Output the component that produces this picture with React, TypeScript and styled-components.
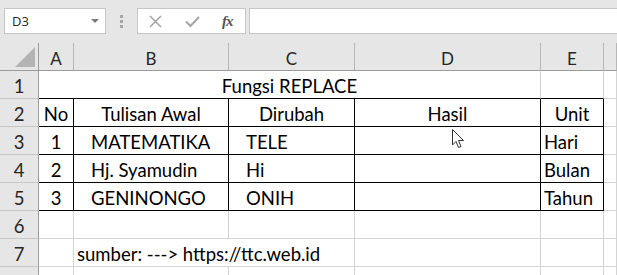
import React from 'react'
import styled, { createGlobalStyle } from 'styled-components'

const GlobalStyle = createGlobalStyle`
  html, body {
    margin: 0;
    padding: 0;
    background: #e6e6e6;
  }
  body {
    font-family: Lato, "Liberation Sans", sans-serif;
  }
`

const Window = styled.div`
  width: 617px;
  height: 275px;
  overflow: hidden;
  background: #e6e6e6;
  position: relative;
`

const FormulaBar = styled.div`
  display: flex;
  align-items: center;
  height: 26px;
  padding: 8px 0 9px 4px;
  border-top: 1px solid #dadada;
  margin-top: -1px;
`

const NameBox = styled.div`
  box-sizing: border-box;
  width: 102px;
  height: 26px;
  background: #fff;
  border: 1px solid #c6c6c6;
  display: flex;
  align-items: center;
  justify-content: space-between;
  padding: 0 6px 0 7px;
  font-family: "Open Sans", "Liberation Sans", sans-serif;
  font-size: 13px;
  color: #262626;
`

const Caret = styled.span`
  width: 0;
  height: 0;
  border-left: 4px solid transparent;
  border-right: 4px solid transparent;
  border-top: 4px solid #7a7a7a;
`

const Grip = styled.div`
  width: 31px;
  display: flex;
  flex-direction: column;
  align-items: center;
  gap: 2px;
  span {
    width: 3px;
    height: 3px;
    background: #a6a6a6;
  }
`

const ButtonBox = styled.div`
  box-sizing: border-box;
  width: 109px;
  height: 26px;
  background: #fff;
  border: 1px solid #c6c6c6;
  display: flex;
  align-items: center;
  padding-left: 11px;
  gap: 23px;
`

const Fx = styled.span`
  font-family: "Liberation Serif", serif;
  font-style: italic;
  font-weight: bold;
  font-size: 15px;
  color: #555;
  margin-left: -1px;
  letter-spacing: -1px;
`

const FormulaInput = styled.div`
  box-sizing: border-box;
  flex: 1;
  height: 26px;
  margin-left: 3px;
  margin-right: -4px;
  background: #fff;
  border: 1px solid #c6c6c6;
`

const Sheet = styled.div`
  display: grid;
  grid-template-columns: 39px 35px 155px 126px 186px 63px 1fr;
  grid-template-rows: 28px repeat(8, 28px);
  background: #fff;
`

type CellProps = {
  $align?: 'left' | 'center' | 'right'
  $indent?: number
  $span?: number
  $right?: 'grid' | 'black' | 'none'
  $bottom?: 'grid' | 'black'
}

const lineColor = (v?: string) =>
  v === 'black' ? '#000' : v === 'none' ? 'transparent' : '#d4d4d4'

const Cell = styled.div<CellProps>`
  box-sizing: border-box;
  grid-column: span ${(p) => p.$span ?? 1};
  display: flex;
  align-items: center;
  justify-content: ${(p) =>
    p.$align === 'center' ? 'center' : p.$align === 'right' ? 'flex-end' : 'flex-start'};
  padding: 2px 3px 0 ${(p) => 3 + (p.$indent ?? 0)}px;
  border-right: 1px solid ${(p) => lineColor(p.$right)};
  border-bottom: 1px solid ${(p) => lineColor(p.$bottom)};
  font-size: 18.5px;
  color: #000;
  white-space: nowrap;
  overflow: visible;
  background: #fff;
`

const ColHeader = styled.div<{ $first?: boolean }>`
  box-sizing: border-box;
  background: #e6e6e6;
  border-right: 1px solid ${(p) => (p.$first ? '#9b9b9b' : '#b7b7b7')};
  border-bottom: 1px solid #9b9b9b;
  display: flex;
  align-items: center;
  justify-content: center;
  padding-top: 3px;
  font-size: 17px;
  color: #262626;
  position: relative;
`

const SelectAll = styled.span`
  position: absolute;
  right: 3px;
  bottom: 3px;
  width: 0;
  height: 0;
  border-left: 20px solid transparent;
  border-bottom: 20px solid #b4b4b4;
`

const RowHeader = styled.div`
  box-sizing: border-box;
  background: #e6e6e6;
  border-right: 1px solid #9b9b9b;
  border-bottom: 1px solid #c6c6c6;
  display: flex;
  align-items: center;
  justify-content: center;
  padding-top: 2px;
  font-size: 18.5px;
  color: #262626;
`

const Pointer = styled.svg`
  position: absolute;
  left: 452px;
  top: 129px;
`

type Row = {
  no: string
  label: string
  cells: React.ReactNode
}

const columns = ['A', 'B', 'C', 'D', 'E', '']

const tableRows = [
  { no: '1', b: 'MATEMATIKA', c: 'TELE', e: 'Hari' },
  { no: '2', b: 'Hj. Syamudin', c: 'Hi', e: 'Bulan' },
  { no: '3', b: 'GENINONGO', c: 'ONIH', e: 'Tahun' },
]

const XIcon = () => (
  <svg width="13" height="13" viewBox="0 0 13 13">
    <path d="M1 1 L12 12 M12 1 L1 12" stroke="#a6a6a6" strokeWidth="1.6" />
  </svg>
)

const CheckIcon = () => (
  <svg width="15" height="13" viewBox="0 0 15 13">
    <path d="M1 6.5 L5.5 11 L14 2" stroke="#a6a6a6" strokeWidth="2" fill="none" />
  </svg>
)

const EmptyCells = () => (
  <>
    <Cell />
    <Cell />
    <Cell />
    <Cell />
    <Cell />
    <Cell />
  </>
)

export default function App() {
  const rows: Row[] = [
    {
      no: '1',
      label: '1',
      cells: (
        <>
          <Cell $span={4} $align="center" $bottom="black">
            Fungsi REPLACE
          </Cell>
          <Cell $bottom="black" />
          <Cell />
        </>
      ),
    },
    {
      no: '2',
      label: '2',
      cells: (
        <>
          <Cell $align="center" $right="black" $bottom="black">No</Cell>
          <Cell $align="center" $right="black" $bottom="black">Tulisan Awal</Cell>
          <Cell $align="center" $right="black" $bottom="black">Dirubah</Cell>
          <Cell $align="center" $right="black" $bottom="black">Hasil</Cell>
          <Cell $align="center" $right="black" $bottom="black">Unit</Cell>
          <Cell />
        </>
      ),
    },
    ...tableRows.map((r, i) => ({
      no: String(i + 3),
      label: String(i + 3),
      cells: (
        <>
          <Cell $align="center" $right="black" $bottom="black">{r.no}</Cell>
          <Cell $indent={14} $right="black" $bottom="black">{r.b}</Cell>
          <Cell $indent={14} $right="black" $bottom="black">{r.c}</Cell>
          <Cell $right="black" $bottom="black" />
          <Cell $right="black" $bottom="black">{r.e}</Cell>
          <Cell />
        </>
      ),
    })),
    { no: '6', label: '6', cells: <EmptyCells /> },
    {
      no: '7',
      label: '7',
      cells: (
        <>
          <Cell />
          <Cell $span={2}>sumber: ---&gt; https://ttc.web.id</Cell>
          <Cell />
          <Cell />
          <Cell />
        </>
      ),
    },
    // row 8 is only a sliver at the bottom edge, its number is not visible
    { no: '8', label: '', cells: <EmptyCells /> },
  ]

  return (
    <Window>
      <GlobalStyle />
      <FormulaBar>
        <NameBox>
          D3
          <Caret />
        </NameBox>
        <Grip>
          <span />
          <span />
          <span />
        </Grip>
        <ButtonBox>
          <XIcon />
          <CheckIcon />
          <Fx>fx</Fx>
        </ButtonBox>
        <FormulaInput />
      </FormulaBar>
      <Sheet>
        <ColHeader $first>
          <SelectAll />
        </ColHeader>
        {columns.map((c, i) => (
          <ColHeader key={i}>{c}</ColHeader>
        ))}
        {rows.map((r) => (
          <React.Fragment key={r.no}>
            <RowHeader>{r.label}</RowHeader>
            {r.cells}
          </React.Fragment>
        ))}
      </Sheet>
      <Pointer width="13" height="20" viewBox="0 0 13 20">
        <path
          d="M0.5 0.5 L0.5 16 L4 12.5 L6.5 18.5 L9 17.5 L6.5 11.5 L11.5 11.5 Z"
          fill="#fff"
          stroke="#333"
          strokeWidth="1"
          strokeLinejoin="round"
        />
      </Pointer>
    </Window>
  )
}
